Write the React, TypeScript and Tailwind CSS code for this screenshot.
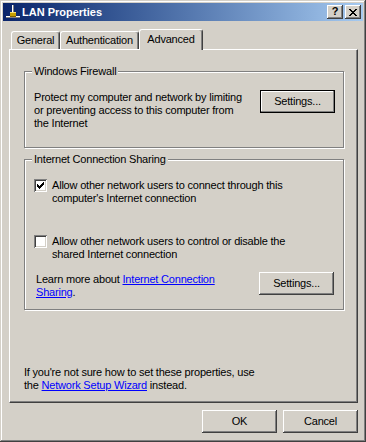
import { ReactNode } from "react";

// Classic-theme "LAN Properties" property sheet, Advanced tab

const bevelOut =
  "shadow-[inset_-1px_-1px_#404040,inset_1px_1px_#ffffff,inset_-2px_-2px_#808080,inset_2px_2px_#d4d0c8]";

function LanIcon() {
  return (
    <svg width="16" height="16" viewBox="0 0 16 16" shapeRendering="crispEdges">
      <rect x="7" y="1" width="2" height="9" fill="#808080" />
      <rect x="7" y="1" width="1" height="9" fill="#ffffff" />
      <rect x="1" y="12" width="14" height="2" fill="#808080" />
      <rect x="1" y="12" width="14" height="1" fill="#ffffff" />
      <rect x="5" y="8" width="6" height="5" fill="#c8a000" />
      <rect x="5" y="8" width="6" height="1" fill="#f8e070" />
      <rect x="5" y="12" width="6" height="1" fill="#806000" />
    </svg>
  );
}

function CaptionButton({ children }: { children: ReactNode }) {
  return (
    <div className={`w-[16px] h-[14px] bg-[#d4d0c8] flex items-center justify-center ${bevelOut}`}>
      {children}
    </div>
  );
}

function TitleBar() {
  return (
    <div className="h-[18px] shrink-0 flex items-center pl-[2px] pr-[2px] bg-linear-to-r from-[#0a246a] to-[#a6caf0]">
      <LanIcon />
      <span className="ml-[1px] text-white font-bold text-[11px] tracking-normal">LAN Properties</span>
      <div className="ml-auto flex gap-[2px]">
        <CaptionButton>
          <span className="text-[11px] font-bold leading-none text-black -mt-[1px]">?</span>
        </CaptionButton>
        <CaptionButton>
          <svg width="8" height="7" viewBox="0 0 8 7" shapeRendering="crispEdges">
            <path d="M0 0h2v1h1v1h2V1h1V0h2v1H7v1H6v1H5v1h1v1h1v1h1v1H6V6H5V5H3v1H2v1H0V6h1V5h1V4h1V3H2V2H1V1H0z" fill="#000" />
          </svg>
        </CaptionButton>
      </div>
    </div>
  );
}

function Tab({ label, width, selected }: { label: string; width: string; selected?: boolean }) {
  return (
    <div
      className={clsxTab(selected) + " " + width}
    >
      {label}
    </div>
  );
}

function clsxTab(selected?: boolean) {
  const base =
    "flex justify-center border-l border-t border-r border-l-white border-t-white border-r-[#404040] rounded-tl-[3px] rounded-tr-[3px] shadow-[inset_-1px_0_#808080] bg-[#d4d0c8]";
  return selected
    ? base + " h-[21px] pt-[3px] -mb-[1px] relative z-10"
    : base + " h-[18px] pt-[2px]";
}

function Button({ label, isDefault }: { label: string; isDefault?: boolean }) {
  return (
    <div
      className={`w-[75px] h-[23px] shrink-0 flex items-center justify-center bg-[#d4d0c8] ${
        isDefault
          ? "border border-black shadow-[inset_-1px_-1px_#808080,inset_1px_1px_#ffffff]"
          : bevelOut
      }`}
    >
      {label}
    </div>
  );
}

function Checkbox({ checked }: { checked?: boolean }) {
  return (
    <div className="w-[13px] h-[13px] shrink-0 bg-white shadow-[inset_1px_1px_#808080,inset_-1px_-1px_#ffffff,inset_2px_2px_#404040,inset_-2px_-2px_#d4d0c8]">
      {checked && (
        <svg width="13" height="13" viewBox="0 0 13 13" shapeRendering="crispEdges">
          <path d="M3 5h1v1h1v1h1V6h1V5h1V4h1V3h1v3H9v1H8v1H7v1H6v1H5V9H4V8H3z" fill="#000" />
        </svg>
      )}
    </div>
  );
}

function GroupBox({ title, className, children }: { title: string; className: string; children: ReactNode }) {
  return (
    <div
      className={`relative w-[320px] border border-[#808080] shadow-[inset_1px_1px_#ffffff,1px_1px_#ffffff] ${className}`}
    >
      <span className="absolute -top-[7px] left-[7px] px-[2px] bg-[#d4d0c8]">{title}</span>
      {children}
    </div>
  );
}

function Link({ children }: { children: ReactNode }) {
  return <span className="text-[#0000ff] underline">{children}</span>;
}

export default function App() {
  return (
    <div className="w-[366px] h-[442px] bg-[#d4d0c8] p-[3px] flex flex-col text-black text-[11px] leading-[13px] tracking-[-0.2px] font-['Liberation_Sans',Arial,sans-serif] shadow-[inset_-1px_-1px_#404040,inset_1px_1px_#d4d0c8,inset_-2px_-2px_#808080,inset_2px_2px_#ffffff]">
      <TitleBar />

      <div className="flex flex-col pl-[6px] pr-[5px]">
        <div className="mt-[8px] h-[20px] flex items-end pl-[2px]">
          <Tab label="General" width="w-[49px]" />
          <Tab label="Authentication" width="w-[79px]" />
          <Tab label="Advanced" width="w-[64px]" selected />
        </div>

        <div className="h-[354px] flex flex-col px-[14px] pb-[10px] border border-t-white border-l-white border-r-[#404040] border-b-[#404040] shadow-[inset_-1px_-1px_#808080]">
          <GroupBox title="Windows Firewall" className="mt-[21px] h-[77px]">
            <div className="flex justify-between pl-[9px] pr-[8px] pt-[19px]">
              <p>
                Protect my computer and network by limiting
                <br />
                or preventing access to this computer from
                <br />
                the Internet
              </p>
              <div className="-mt-[1px]">
                <Button label="Settings..." isDefault />
              </div>
            </div>
          </GroupBox>

          <GroupBox title="Internet Connection Sharing" className="mt-[11px] h-[151px]">
            <div className="flex flex-col pl-[9px] pr-[9px] pt-[19px]">
              <div className="flex gap-[5px]">
                <Checkbox checked />
                <p>
                  Allow other network users to connect through this
                  <br />
                  computer's Internet connection
                </p>
              </div>
              <div className="flex gap-[5px] mt-[30px]">
                <Checkbox />
                <p>
                  Allow other network users to control or disable the
                  <br />
                  shared Internet connection
                </p>
              </div>
              <div className="flex justify-between mt-[12px] pl-[2px]">
                <p>
                  Learn more about <Link>Internet Connection</Link>
                  <br />
                  <Link>Sharing</Link>.
                </p>
                <div className="-mt-[1px]">
                  <Button label="Settings..." />
                </div>
              </div>
            </div>
          </GroupBox>

          <p className="mt-auto">
            If you're not sure how to set these properties, use
            <br />
            the <Link>Network Setup Wizard</Link> instead.
          </p>
        </div>

        <div className="mt-[7px] flex justify-end gap-[6px]">
          <Button label="OK" />
          <Button label="Cancel" />
        </div>
      </div>
    </div>
  );
}
